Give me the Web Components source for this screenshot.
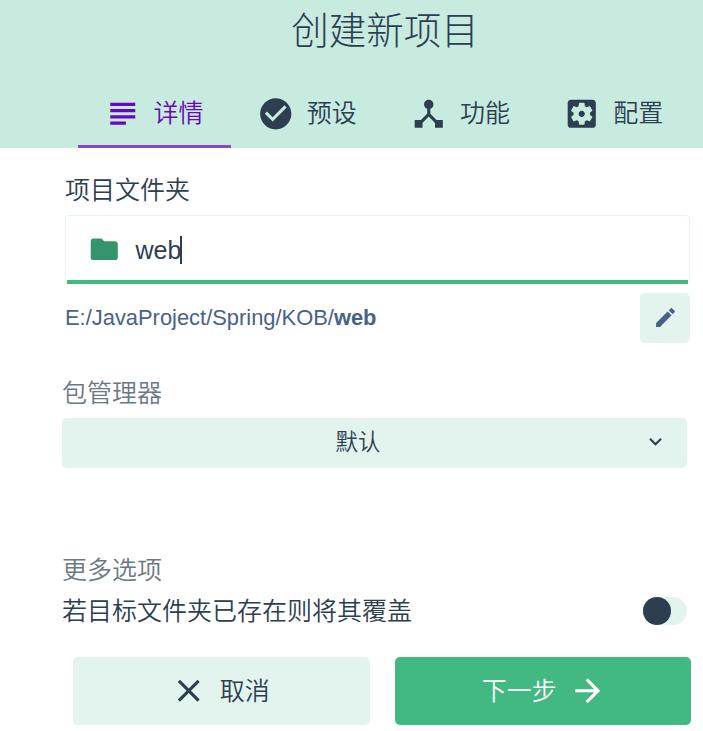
<!DOCTYPE html>
<html lang="zh-CN">
<head>
<meta charset="utf-8">
<title>创建新项目</title>
<style>
body { margin: 0; background: #fff; color: #2c3e50; font-family: "Liberation Sans", "Noto Sans CJK SC", sans-serif; font-weight: 350; }
</style>
</head>
<body>
<create-project></create-project>
<script>
const ICONS = {
  subject: 'M14 17H4v2h10v-2zm6-8H4v2h16V9zM4 15h16v-2H4v2zM4 5v2h16V5H4z',
  check: 'M12 2C6.48 2 2 6.48 2 12s4.48 10 10 10 10-4.48 10-10S17.52 2 12 2zm-2 15l-5-5 1.41-1.41L10 14.17l7.59-7.59L19 8l-9 9z',
  hub: 'M17 16l-4-4V8.82C14.16 8.4 15 7.3 15 6c0-1.66-1.34-3-3-3S9 4.34 9 6c0 1.3.84 2.4 2 2.82V12l-4 4H3v5h5v-3.05l4-4.2 4 4.2V21h5v-5h-4z',
  settings: 'M12 10c-1.1 0-2 .9-2 2s.9 2 2 2 2-.9 2-2-.9-2-2-2zm7-7H5c-1.11 0-2 .9-2 2v14c0 1.1.89 2 2 2h14c1.11 0 2-.9 2-2V5c0-1.1-.89-2-2-2zm-1.75 9c0 .23-.02.46-.05.68l1.48 1.16c.13.11.17.3.08.45l-1.4 2.42c-.09.15-.27.21-.43.15l-1.74-.7c-.36.28-.76.51-1.18.69l-.26 1.85c-.03.17-.18.3-.35.3h-2.8c-.17 0-.32-.13-.35-.29l-.26-1.85c-.43-.18-.82-.41-1.18-.69l-1.74.7c-.16.06-.34 0-.43-.15l-1.4-2.42c-.09-.15-.05-.34.08-.45l1.48-1.16c-.03-.23-.05-.46-.05-.69 0-.23.02-.46.05-.68l-1.48-1.16c-.13-.11-.17-.3-.08-.45l1.4-2.42c.09-.15.27-.21.43-.15l1.74.7c.36-.28.76-.51 1.18-.69l.26-1.85c.03-.17.18-.3.35-.3h2.8c.17 0 .32.13.35.29l.26 1.85c.43.18.82.41 1.18.69l1.74-.7c.16-.06.34 0 .43.15l1.4 2.42c.09.15.05.34-.08.45l-1.48 1.16c.03.23.05.46.05.69z',
  folder: 'M10 4H4c-1.1 0-1.99.9-1.99 2L2 18c0 1.1.9 2 2 2h16c1.1 0 2-.9 2-2V8c0-1.1-.9-2-2-2h-8l-2-2z',
  edit: 'M3 17.25V21h3.75L17.81 9.94l-3.75-3.75L3 17.25zM20.71 7.04c.39-.39.39-1.02 0-1.41l-2.34-2.34c-.39-.39-1.02-.39-1.41 0l-1.83 1.83 3.75 3.75 1.83-1.83z',
  chevron: 'M7.41 8.59L12 13.17l4.59-4.58L18 10l-6 6-6-6 1.41-1.41z',
  close: 'M19 6.41L17.59 5 12 10.59 6.41 5 5 6.41 10.59 12 5 17.59 6.41 19 12 13.41 17.59 19 19 17.59 13.41 12z',
  arrow: 'M12 4l-1.41 1.41L16.17 11H4v2h12.17l-5.58 5.59L12 20l8-8z'
};

function define(name, html) {
  customElements.define(name, class extends HTMLElement {
    constructor() {
      super();
      this.attachShadow({ mode: 'open' }).innerHTML = html;
    }
  });
}

customElements.define('ui-icon', class extends HTMLElement {
  constructor() { super(); this.attachShadow({ mode: 'open' }); }
  connectedCallback() {
    this.shadowRoot.innerHTML = `
      <style>
        :host { display: block; flex: none; width: var(--size, 37.5px); height: var(--size, 37.5px); }
        svg { display: block; width: 100%; height: 100%; fill: currentColor; }
      </style>
      <svg viewBox="0 0 24 24"><path d="${ICONS[this.getAttribute('name')]}"/></svg>`;
  }
});

define('ui-tab', `
  <style>
    :host { display: flex; box-sizing: border-box; width: 153.2px; height: 69px; padding: 3px 2px 0 0;
      align-items: center; justify-content: center; gap: 12.5px; font-size: 25px; line-height: 36px;
      border-bottom: 3px solid transparent; white-space: nowrap; }
    :host([active]) { color: #6806c1; border-bottom-color: #8948cb; }
    span { padding-bottom: 1px; }
  </style>
  <slot name="icon"></slot><span><slot></slot></span>`);

define('ui-input', `
  <style>
    :host { display: flex; box-sizing: border-box; height: 69px; border: 1px solid #e3f4ee; border-bottom: 0;
      border-radius: 5px; padding: 0 1px; flex-direction: column; }
    .row { flex: 1; display: flex; align-items: center; padding: 3px 0 0 20.5px; gap: 15.5px; }
    .icon { color: #35946a; --size: 32.5px; }
    .value { display: flex; align-items: center; font-size: 25px; line-height: 30px; }
    .caret { width: 2px; height: 28px; margin-left: -1px; background: #2c3e50; }
    .bar { height: 4px; background: #42b983; }
  </style>
  <div class="row"><div class="icon"><slot name="icon"></slot></div>
    <div class="value"><slot></slot><i class="caret"></i></div></div>
  <div class="bar"></div>`);

define('ui-icon-button', `
  <style>
    :host { display: flex; box-sizing: border-box; width: 50px; height: 50px; align-items: center; justify-content: center;
      padding-bottom: 1px; background: #e3f4ee; border-radius: 5px; color: #476287; --size: 25px; }
  </style><slot></slot>`);

define('ui-select', `
  <style>
    :host { display: flex; box-sizing: border-box; height: 50px; align-items: center; background: #e3f4ee;
      border-radius: 5px; padding: 0 19px 3px 11px; font-size: 22.4px; line-height: 32px; --size: 25px; }
    span { flex: 1; text-align: center; padding-top: 2px; }
  </style><span><slot></slot></span><ui-icon name="chevron"></ui-icon>`);

define('ui-switch', `
  <style>
    :host { display: flex; width: 44px; height: 28px; border-radius: 14px; background: #e3f4ee; }
    i { width: 28px; height: 28px; border-radius: 50%; background: #2c3e50; }
  </style><i></i>`);

define('ui-button', `
  <style>
    :host { display: flex; box-sizing: border-box; flex: 1; height: 68px; align-items: center; justify-content: center; gap: 12.5px;
      padding-right: 3px; background: #e3f4ee; border-radius: 5px; font-size: 25px; line-height: 36px; }
    :host([primary]) { background: #42b983; color: #fff; padding: 0 0 0 3px; }
    span { padding-bottom: 1px; }
  </style><slot name="before"></slot><span><slot></slot></span><slot name="after"></slot>`);

define('create-project', `
  <style>
    :host { display: block; height: 731px; overflow: hidden; }
    header { height: 148px; background: #c7ebdf; display: flex; flex-direction: column; }
    h1 { box-sizing: border-box; margin: 0; height: 79px; padding: 1px 0 0 67px; font-size: 37.5px; font-weight: 300; line-height: 60px; text-align: center; }
    nav { display: flex; padding-left: 78px; }
    .folder { padding: 23px 13px 0 65px; }
    .label { font-size: 25px; line-height: 38px; }
    .folder .label { margin-bottom: 6px; }
    .path { display: flex; justify-content: space-between; align-items: center; margin-top: 9px;
      font-size: 21.9px; line-height: 28px; color: #476287; }
    .path span { padding-bottom: 1px; }
    b { font-weight: 700; }
    .options { padding: 31px 16px 0 62px; }
    .muted { color: #6b7885; }
    .options ui-select { margin-top: 6px; }
    .more { margin-top: 83px; }
    .toggle { display: flex; justify-content: space-between; align-items: center; margin-top: 2px; height: 40px; }
    footer { display: flex; gap: 25px; padding: 26px 12px 0 73px; }
  </style>
  <header>
    <h1>创建新项目</h1>
    <nav>
      <ui-tab active><ui-icon slot="icon" name="subject"></ui-icon>详情</ui-tab>
      <ui-tab><ui-icon slot="icon" name="check"></ui-icon>预设</ui-tab>
      <ui-tab><ui-icon slot="icon" name="hub"></ui-icon>功能</ui-tab>
      <ui-tab><ui-icon slot="icon" name="settings"></ui-icon>配置</ui-tab>
    </nav>
  </header>
  <section class="folder">
    <div class="label">项目文件夹</div>
    <ui-input><ui-icon slot="icon" name="folder"></ui-icon>web</ui-input>
    <div class="path"><span>E:/JavaProject/Spring/KOB/<b>web</b></span>
      <ui-icon-button><ui-icon name="edit"></ui-icon></ui-icon-button></div>
  </section>
  <section class="options">
    <div class="label muted">包管理器</div>
    <ui-select>默认</ui-select>
    <div class="label muted more">更多选项</div>
    <div class="toggle"><div class="label">若目标文件夹已存在则将其覆盖</div><ui-switch></ui-switch></div>
  </section>
  <footer>
    <ui-button><ui-icon slot="before" name="close"></ui-icon>取消</ui-button>
    <ui-button primary>下一步<ui-icon slot="after" name="arrow"></ui-icon></ui-button>
  </footer>`);
</script>
</body>
</html>
